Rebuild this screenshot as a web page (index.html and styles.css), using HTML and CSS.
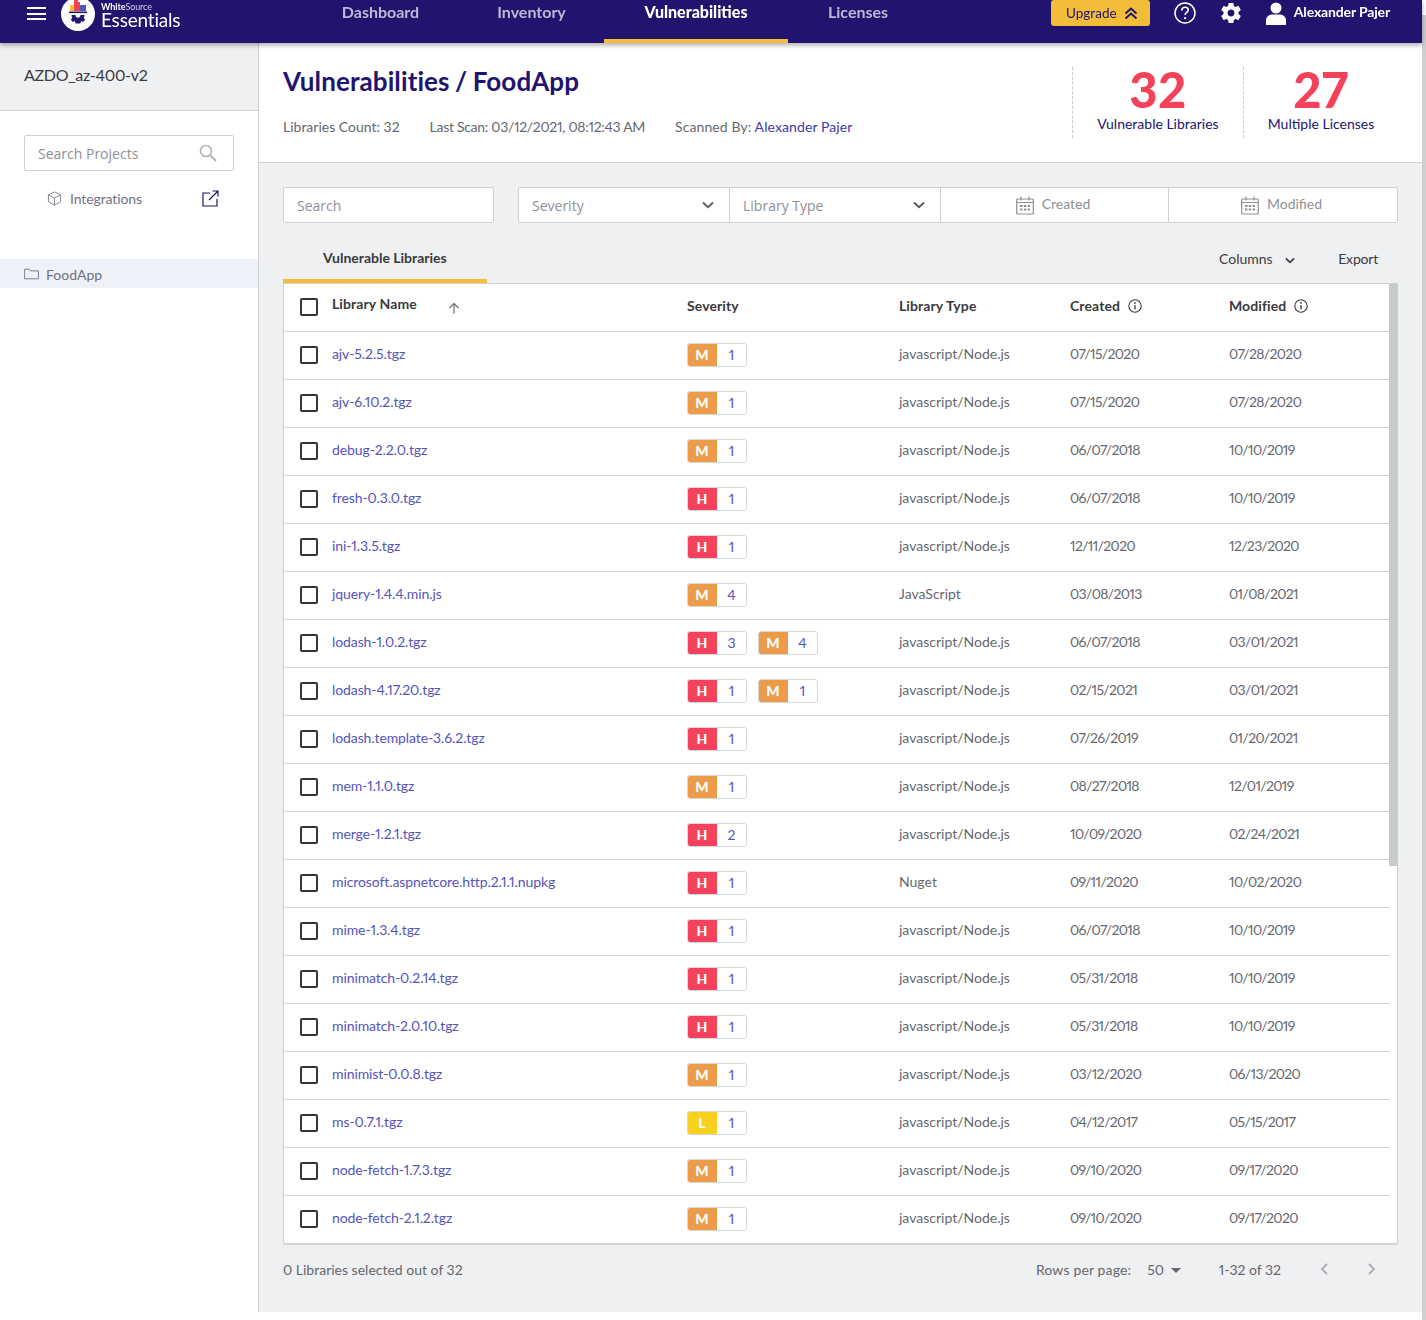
FILE: index.html
```html
<!DOCTYPE html>
<html lang="en">
<head>
    <meta charset="UTF-8">
    <meta name="viewport" content="width=device-width, initial-scale=1.0">
    <title>Vulnerabilities / FoodApp</title>
    <link rel="stylesheet" href="styles.css">
</head>
<body>
    <svg class="sprites" aria-hidden="true">
        <symbol id="calendar" viewBox="0 0 18 20">
            <path d="M1.5 4h15a.8.8 0 0 1 .8.8v13.4a.8.8 0 0 1-.8.8h-15a.8.8 0 0 1-.8-.8V4.800a.8.8 0 0 1 .8-.8zM.8 7.500h16.400M5 1.500v4M13 1.500v4" fill="none" stroke="currentColor" stroke-width="1.200"/>
            <path d="M4 10h2.400v2H4zM7.800 10h2.400v2H7.800zM11.600 10H14v2h-2.400zM4 13.500h2.400v2H4zM7.800 13.500h2.400v2H7.800zM11.600 13.500H14v2h-2.400z" fill="currentColor"/>
        </symbol>
        <symbol id="chevron" viewBox="0 0 12 8">
            <path d="M1 1.500l5 4.700 5-4.700" fill="none" stroke="currentColor" stroke-width="2"/>
        </symbol>
        <symbol id="info" viewBox="0 0 14 14">
            <circle cx="7" cy="7" r="6.200" fill="none" stroke="currentColor" stroke-width="1.100"/>
            <path d="M7 6v4.500" stroke="currentColor" stroke-width="1.300"/>
            <circle cx="7" cy="3.900" r=".9" fill="currentColor"/>
        </symbol>
    </svg>

    <div class="page-scroll"></div>

    <div class="app">
        <header class="topbar">
            <button class="menu-btn" aria-label="Menu"><span></span><span></span><span></span></button>
            <div class="logo">
                <svg class="logo-mark" viewBox="0 0 34 34" width="34" height="34">
                    <circle cx="17" cy="17" r="17" fill="#fff"/>
                    <rect x="9" y="8" width="4" height="6" fill="#f4bd33"/>
                    <rect x="13" y="3" width="4" height="11" fill="#f1404f"/>
                    <rect x="17" y="5" width="2" height="9" fill="#f1404f"/>
                    <rect x="19" y="8" width="6" height="6" fill="#4d58c4"/>
                    <rect x="8" y="14.500" width="18" height="1.600" fill="#21146e"/>
                    <path d="M10.500 18h13c0 1.200-.3 2-.8 3l1.500 1.500-2 2.500-2-1-1 2.500h-4.400l-1-2.500-2 1-2-2.500 1.500-1.500c-.5-1-.8-1.800-.8-3z" fill="#21146e"/>
                    <path d="M14.500 18h5c0 1.600-1.100 2.700-2.500 2.700s-2.500-1.100-2.500-2.700z" fill="#fff"/>
                </svg>
                <div class="logo-text">
                    <div class="logo-small"><b>White</b>Source</div>
                    <div class="logo-big">Essentials</div>
                </div>
            </div>
            <nav class="nav">
                <a class="nav-item">Dashboard</a>
                <a class="nav-item">Inventory</a>
                <a class="nav-item active">Vulnerabilities</a>
                <a class="nav-item">Licenses</a>
            </nav>
            <div class="top-right">
                <button class="upgrade">Upgrade
                    <svg viewBox="0 0 14 14" width="14" height="14"><path d="M1.500 7.500L7 2.500l5.500 5M1.500 12.500L7 7.500l5.500 5" fill="none" stroke="#21146e" stroke-width="2"/></svg>
                </button>
                <svg class="help-icon" viewBox="0 0 22 22" width="22" height="22">
                    <circle cx="11" cy="11" r="10" fill="none" stroke="#fff" stroke-width="1.500"/>
                    <path d="M7.800 8.500c0-2 1.400-3.200 3.300-3.200s3.200 1.100 3.200 2.800c0 2.400-3.200 2.400-3.200 5" fill="none" stroke="#fff" stroke-width="1.600"/>
                    <circle cx="11.100" cy="16.200" r="1.100" fill="#fff"/>
                </svg>
                <svg class="gear-icon" viewBox="0 0 24 24" width="24" height="24">
                    <path fill="#fff" d="M19.430 12.980c.04-.32.070-.64.070-.98s-.03-.66-.07-.98l2.110-1.650c.19-.15.24-.42.120-.64l-2-3.460c-.12-.22-.39-.3-.61-.22l-2.490 1c-.52-.4-1.080-.73-1.690-.98l-.38-2.650C14.460 2.180 14.250 2 14 2h-4c-.25 0-.46.18-.49.42l-.38 2.650c-.61.25-1.170.59-1.690.98l-2.490-1c-.23-.09-.49 0-.61.22l-2 3.460c-.13.22-.07.49.12.64l2.110 1.650c-.04.32-.07.65-.07.98s.03.66.07.98l-2.110 1.650c-.19.15-.24.42-.12.64l2 3.460c.12.22.39.3.61.22l2.490-1c.52.4 1.080.73 1.690.98l.38 2.650c.03.24.24.42.49.42h4c.25 0 .46-.18.49-.42l.38-2.650c.61-.25 1.170-.59 1.690-.98l2.490 1c.23.09.49 0 .61-.22l2-3.460c.12-.22.07-.49-.12-.64l-2.110-1.650zM12 15.500c-1.930 0-3.500-1.570-3.500-3.500s1.570-3.500 3.500-3.500 3.500 1.570 3.500 3.500-1.570 3.500-3.500 3.500z"/>
                </svg>
                <div class="user">
                    <svg viewBox="0 0 20 24" width="20" height="24">
                        <circle cx="10" cy="7" r="5.500" fill="#fff"/>
                        <path d="M0 24v-4.500C0 15.500 3.500 13.500 6 13.500h8c2.500 0 6 2 6 6V24z" fill="#fff"/>
                    </svg>
                    <span>Alexander Pajer</span>
                </div>
            </div>
        </header>

        <div class="body-row">
            <aside class="sidebar">
                <div class="org">AZDO_az-400-v2</div>
                <div class="project-search">
                    <span>Search Projects</span>
                    <svg viewBox="0 0 18 18" width="18" height="18"><circle cx="7" cy="7" r="5.500" fill="none" stroke="#b4b4b8" stroke-width="1.600"/><path d="M11 11l6 6" stroke="#b4b4b8" stroke-width="2"/></svg>
                </div>
                <div class="integrations">
                    <svg viewBox="0 0 16 16" width="15" height="15"><path d="M8 1l6.500 3v7.500L8 15l-6.500-3.500V4zM1.500 4L8 7.500 14.500 4M8 7.500V15" fill="none" stroke="#7d7f8e" stroke-width="1"/></svg>
                    <span>Integrations</span>
                    <svg class="external" viewBox="0 0 17 17" width="17" height="17"><path d="M8 3H1v13h14V9M7 10l9-9M10.500 1H16v5.500" fill="none" stroke="#21146e" stroke-width="1.200"/></svg>
                </div>
                <div class="project-row">
                    <svg viewBox="0 0 15 12" width="15" height="12"><path d="M.6 10.800V1.200h4.600l1.400 1.700h7.800v7.900z" fill="none" stroke="#7d7f8e" stroke-width="1"/></svg>
                    <span>FoodApp</span>
                </div>
            </aside>

            <main class="main">
                <section class="page-head">
                    <div class="page-info">
                        <h1>Vulnerabilities / FoodApp</h1>
                        <div class="meta">
                            <span>Libraries Count: 32</span>
                            <span class="meta-scan">Last Scan: 03/12/2021, 08:12:43 AM</span>
                            <span class="meta-by">Scanned By: <a>Alexander Pajer</a></span>
                        </div>
                    </div>
                    <div class="stat stat-first">
                        <div class="stat-num">32</div>
                        <div class="stat-label">Vulnerable Libraries</div>
                    </div>
                    <div class="stat stat-second">
                        <div class="stat-num">27</div>
                        <div class="stat-label">Multiple Licenses</div>
                    </div>
                </section>

                <section class="content">
                    <div class="filters">
                        <div class="filter-search">Search</div>
                        <div class="filter-group">
                            <div class="filter-select">Severity <svg width="12" height="8"><use href="#chevron"/></svg></div>
                            <div class="filter-select">Library Type <svg width="12" height="8"><use href="#chevron"/></svg></div>
                            <div class="filter-date"><svg width="18" height="20"><use href="#calendar"/></svg><span>Created</span></div>
                            <div class="filter-date"><svg width="18" height="20"><use href="#calendar"/></svg><span>Modified</span></div>
                        </div>
                    </div>

                    <div class="tabs">
                        <div class="tab">Vulnerable Libraries</div>
                        <div class="tab-actions">
                            <span class="columns-btn">Columns <svg width="10" height="7"><use href="#chevron"/></svg></span>
                            <span class="export-btn">Export</span>
                        </div>
                    </div>

                    <div class="table-card">
                        <div class="table-scroll"></div>
                        <div class="row head">
                            <div class="check-cell"><span class="check"></span></div>
                            <div class="name-head">Library Name
                                <svg viewBox="0 0 12 12" width="12" height="12"><path d="M6 11.500V1.500M1.500 6L6 1.500 10.500 6" fill="none" stroke="#77777c" stroke-width="1.300"/></svg>
                            </div>
                            <div>Severity</div>
                            <div>Library Type</div>
                            <div class="info-head">Created <svg width="14" height="14"><use href="#info"/></svg></div>
                            <div class="info-head">Modified <svg width="14" height="14"><use href="#info"/></svg></div>
                        </div>

                        <div class="row"><div class="check-cell"><span class="check"></span></div><a>ajv-5.2.5.tgz</a><div class="sev"><span class="badge"><b class="m">M</b><i>1</i></span></div><div>javascript/Node.js</div><div class="date">07/15/2020</div><div class="date">07/28/2020</div></div>
                        <div class="row"><div class="check-cell"><span class="check"></span></div><a>ajv-6.10.2.tgz</a><div class="sev"><span class="badge"><b class="m">M</b><i>1</i></span></div><div>javascript/Node.js</div><div class="date">07/15/2020</div><div class="date">07/28/2020</div></div>
                        <div class="row"><div class="check-cell"><span class="check"></span></div><a>debug-2.2.0.tgz</a><div class="sev"><span class="badge"><b class="m">M</b><i>1</i></span></div><div>javascript/Node.js</div><div class="date">06/07/2018</div><div class="date">10/10/2019</div></div>
                        <div class="row"><div class="check-cell"><span class="check"></span></div><a>fresh-0.3.0.tgz</a><div class="sev"><span class="badge"><b class="h">H</b><i>1</i></span></div><div>javascript/Node.js</div><div class="date">06/07/2018</div><div class="date">10/10/2019</div></div>
                        <div class="row"><div class="check-cell"><span class="check"></span></div><a>ini-1.3.5.tgz</a><div class="sev"><span class="badge"><b class="h">H</b><i>1</i></span></div><div>javascript/Node.js</div><div class="date">12/11/2020</div><div class="date">12/23/2020</div></div>
                        <div class="row"><div class="check-cell"><span class="check"></span></div><a>jquery-1.4.4.min.js</a><div class="sev"><span class="badge"><b class="m">M</b><i>4</i></span></div><div>JavaScript</div><div class="date">03/08/2013</div><div class="date">01/08/2021</div></div>
                        <div class="row"><div class="check-cell"><span class="check"></span></div><a>lodash-1.0.2.tgz</a><div class="sev"><span class="badge"><b class="h">H</b><i>3</i></span><span class="badge"><b class="m">M</b><i>4</i></span></div><div>javascript/Node.js</div><div class="date">06/07/2018</div><div class="date">03/01/2021</div></div>
                        <div class="row"><div class="check-cell"><span class="check"></span></div><a>lodash-4.17.20.tgz</a><div class="sev"><span class="badge"><b class="h">H</b><i>1</i></span><span class="badge"><b class="m">M</b><i>1</i></span></div><div>javascript/Node.js</div><div class="date">02/15/2021</div><div class="date">03/01/2021</div></div>
                        <div class="row"><div class="check-cell"><span class="check"></span></div><a>lodash.template-3.6.2.tgz</a><div class="sev"><span class="badge"><b class="h">H</b><i>1</i></span></div><div>javascript/Node.js</div><div class="date">07/26/2019</div><div class="date">01/20/2021</div></div>
                        <div class="row"><div class="check-cell"><span class="check"></span></div><a>mem-1.1.0.tgz</a><div class="sev"><span class="badge"><b class="m">M</b><i>1</i></span></div><div>javascript/Node.js</div><div class="date">08/27/2018</div><div class="date">12/01/2019</div></div>
                        <div class="row"><div class="check-cell"><span class="check"></span></div><a>merge-1.2.1.tgz</a><div class="sev"><span class="badge"><b class="h">H</b><i>2</i></span></div><div>javascript/Node.js</div><div class="date">10/09/2020</div><div class="date">02/24/2021</div></div>
                        <div class="row"><div class="check-cell"><span class="check"></span></div><a>microsoft.aspnetcore.http.2.1.1.nupkg</a><div class="sev"><span class="badge"><b class="h">H</b><i>1</i></span></div><div>Nuget</div><div class="date">09/11/2020</div><div class="date">10/02/2020</div></div>
                        <div class="row"><div class="check-cell"><span class="check"></span></div><a>mime-1.3.4.tgz</a><div class="sev"><span class="badge"><b class="h">H</b><i>1</i></span></div><div>javascript/Node.js</div><div class="date">06/07/2018</div><div class="date">10/10/2019</div></div>
                        <div class="row"><div class="check-cell"><span class="check"></span></div><a>minimatch-0.2.14.tgz</a><div class="sev"><span class="badge"><b class="h">H</b><i>1</i></span></div><div>javascript/Node.js</div><div class="date">05/31/2018</div><div class="date">10/10/2019</div></div>
                        <div class="row"><div class="check-cell"><span class="check"></span></div><a>minimatch-2.0.10.tgz</a><div class="sev"><span class="badge"><b class="h">H</b><i>1</i></span></div><div>javascript/Node.js</div><div class="date">05/31/2018</div><div class="date">10/10/2019</div></div>
                        <div class="row"><div class="check-cell"><span class="check"></span></div><a>minimist-0.0.8.tgz</a><div class="sev"><span class="badge"><b class="m">M</b><i>1</i></span></div><div>javascript/Node.js</div><div class="date">03/12/2020</div><div class="date">06/13/2020</div></div>
                        <div class="row"><div class="check-cell"><span class="check"></span></div><a>ms-0.7.1.tgz</a><div class="sev"><span class="badge"><b class="l">L</b><i>1</i></span></div><div>javascript/Node.js</div><div class="date">04/12/2017</div><div class="date">05/15/2017</div></div>
                        <div class="row"><div class="check-cell"><span class="check"></span></div><a>node-fetch-1.7.3.tgz</a><div class="sev"><span class="badge"><b class="m">M</b><i>1</i></span></div><div>javascript/Node.js</div><div class="date">09/10/2020</div><div class="date">09/17/2020</div></div>
                        <div class="row last"><div class="check-cell"><span class="check"></span></div><a>node-fetch-2.1.2.tgz</a><div class="sev"><span class="badge"><b class="m">M</b><i>1</i></span></div><div>javascript/Node.js</div><div class="date">09/10/2020</div><div class="date">09/17/2020</div></div>
                    </div>

                    <div class="table-foot">
                        <span>0 Libraries selected out of 32</span>
                        <div class="pager">
                            <span class="rows-label">Rows per page:</span>
                            <span class="rows-select">50 <i class="caret"></i></span>
                            <span class="range">1-32 of 32</span>
                            <svg viewBox="0 0 8 12" width="8" height="12"><path d="M7 1L2 6l5 5" fill="none" stroke="#a9abaf" stroke-width="1.800"/></svg>
                            <svg viewBox="0 0 8 12" width="8" height="12"><path d="M1 1l5 5-5 5" fill="none" stroke="#a9abaf" stroke-width="1.800"/></svg>
                        </div>
                    </div>
                </section>
            </main>
        </div>
    </div>
</body>
</html>
```

FILE: styles.css
```css
* {
    margin: 0;
    padding: 0;
    box-sizing: border-box;
}

body {
    font-family: "Lato", "Open Sans", sans-serif;
    font-size: 14px;
    font-variant-numeric: proportional-nums;
    color: #66676d;
    background-color: #fff;
    height: 1320px;
    overflow: hidden;
}

.sprites {
    display: none;
}

.page-scroll {
    position: fixed;
    top: 15px;
    right: 0;
    bottom: 0;
    width: 4px;
    background-color: #cfcfcf;
}

.app {
    width: 1422px;
    height: 1312px;
    display: flex;
    flex-direction: column;
}

button {
    border: none;
    background: none;
    font-family: inherit;
}

/* top bar */
.topbar {
    height: 43px;
    flex: none;
    background-color: #21146e;
    box-shadow: 0 2px 5px rgba(0, 0, 0, 0.35);
    display: flex;
    position: relative;
    z-index: 2;
}

.menu-btn {
    width: 19px;
    margin: 7px 0 0 27px;
    height: 13px;
    display: flex;
    flex-direction: column;
    justify-content: space-between;
}

.menu-btn span {
    display: block;
    height: 2px;
    background-color: #fff;
}

.logo {
    display: flex;
    align-items: flex-start;
    margin-left: 15px;
    margin-top: -3px;
    color: #fff;
    width: 118px;
    flex: none;
}

.logo-mark {
    flex: none;
}

.logo-text {
    margin-left: 6px;
    padding-top: 5px;
}

.logo-small {
    font-size: 9px;
    line-height: 9px;
    color: #cfcde2;
    letter-spacing: -0.1px;
}

.logo-small b {
    color: #fff;
}

.logo-big {
    font-size: 19px;
    line-height: 17px;
    letter-spacing: -0.2px;
}

.nav {
    display: grid;
    grid-template-columns: 157px 145px 184px 140px;
    margin-left: 123px;
}

.nav-item {
    padding-top: 2px;
    text-align: center;
    font-size: 16px;
    font-weight: 700;
    color: #bdb9d4;
    border-bottom: 4px solid transparent;
}

.nav-item.active {
    color: #fff;
    font-weight: 900;
    border-bottom-color: #f3bd3a;
}

.top-right {
    margin-left: auto;
    display: flex;
    align-items: flex-start;
    padding-right: 32px;
}

.upgrade {
    width: 99px;
    height: 26px;
    padding-left: 3px;
    background-color: #f3bd3a;
    color: #21146e;
    border-radius: 3px;
    font-size: 13.500px;
    display: flex;
    align-items: center;
    justify-content: center;
    gap: 7px;
}

.help-icon {
    margin: 2px 0 0 24px;
}

.gear-icon {
    margin: 1px 0 0 23px;
}

.user {
    display: flex;
    align-items: flex-start;
    gap: 8px;
    margin-left: 23px;
    margin-top: 1px;
    color: #fff;
    font-size: 14px;
    font-weight: 700;
    line-height: 22px;
    letter-spacing: -0.15px;
}

/* sidebar */
.body-row {
    flex: 1;
    display: flex;
    min-height: 0;
}

.sidebar {
    width: 259px;
    flex: none;
    border-right: 1px solid #cfd0d3;
    background-color: #fff;
}

.org {
    height: 68px;
    background-color: #eff0f2;
    border-bottom: 1px solid #cfd0d3;
    padding: 22px 24px 0;
    font-size: 16px;
    letter-spacing: -0.3px;
    color: #3a3a40;
}

.project-search {
    margin: 24px 24px 0;
    width: 210px;
    height: 36px;
    border: 1px solid #cfd0d3;
    border-radius: 2px;
    padding: 0 16px 0 13px;
    display: flex;
    align-items: center;
    justify-content: space-between;
    font-family: "Open Sans", sans-serif;
    color: #8e8f95;
}

.integrations {
    display: flex;
    align-items: center;
    margin: 17px 0 0 47px;
    width: 172px;
    height: 20px;
    color: #6f7180;
    letter-spacing: -0.1px;
}

.integrations span {
    margin-left: 8px;
}

.integrations .external {
    margin-left: auto;
}

.project-row {
    margin-top: 51px;
    height: 29px;
    padding-top: 1px;
    background-color: #eef1f8;
    display: flex;
    align-items: center;
    gap: 7px;
    padding-left: 24px;
    color: #6f7180;
}

/* page head */
.main {
    flex: 1;
    display: flex;
    flex-direction: column;
    min-width: 0;
}

.page-head {
    height: 120px;
    flex: none;
    border-bottom: 1px solid #cfd0d3;
    padding: 24px 0 0 24px;
    display: flex;
    align-items: flex-start;
}

.page-info {
    flex: 1;
}

h1 {
    margin-top: -1px;
    font-size: 26px;
    line-height: 30px;
    font-weight: 700;
    color: #21146e;
    letter-spacing: 0.1px;
    word-spacing: -1px;
}

.meta {
    margin-top: 22px;
    display: flex;
    gap: 30px;
    color: #66676d;
}

.meta-scan {
    letter-spacing: -0.3px;
}

.meta-by {
    letter-spacing: 0.1px;
}

.meta a {
    color: #3d3aa8;
}

.stat {
    height: 71px;
    border-left: 1px dashed #c8c9cc;
    text-align: center;
}

.stat-first {
    width: 171px;
}

.stat-second {
    width: 155px;
    margin-right: 24px;
}

.stat-num {
    font-size: 49px;
    line-height: 44px;
    font-weight: 900;
    letter-spacing: 0.5px;
    color: #f3425a;
}

.stat-label {
    margin-top: 4px;
    color: #21146e;
    font-size: 14px;
}

/* content */
.content {
    flex: 1;
    background-color: #eff0f2;
    padding: 24px 24px 0;
    min-height: 0;
}

.filters {
    display: flex;
    gap: 24px;
    font-family: "Open Sans", sans-serif;
    color: #8e8f95;
}

.filter-search {
    width: 211px;
    height: 36px;
    background-color: #fff;
    border: 1px solid #cfd0d3;
    border-radius: 2px;
    padding: 8px 13px;
}

.filter-group {
    flex: 1;
    display: flex;
    height: 36px;
    background-color: #fff;
    border: 1px solid #cfd0d3;
    border-radius: 2px;
}

.filter-select {
    width: 211px;
    border-right: 1px solid #cfd0d3;
    padding: 0 15px 0 13px;
    display: flex;
    align-items: center;
    justify-content: space-between;
}

.filter-select svg {
    color: #5e5e62;
}

.filter-date {
    width: 227px;
    padding-right: 3px;
    display: flex;
    align-items: center;
    justify-content: center;
    gap: 8px;
    color: #8e8f95;
    font-family: "Lato", sans-serif;
}

.filter-date:last-child {
    flex: 1;
    border-left: 1px solid #cfd0d3;
}

.filter-date span {
    margin-bottom: 3px;
}

.tabs {
    height: 60px;
    display: flex;
    align-items: stretch;
    justify-content: space-between;
}

.tab {
    width: 204px;
    padding: 26px 0 0 40px;
    border-bottom: 4px solid #f3bd3a;
    font-weight: 700;
    color: #3a3a40;
}

.tab-actions {
    display: flex;
    gap: 43px;
    padding: 27px 20px 0 0;
    color: #3a3a40;
}

.export-btn {
    letter-spacing: -0.2px;
}

.columns-btn svg {
    margin-left: 9px;
}

.table-card {
    position: relative;
    background-color: #fff;
    border: 1px solid #cfd0d3;
    border-radius: 0 0 2px 2px;
    box-shadow: 0 1px 1px rgba(0, 0, 0, 0.12);
    height: 961px;
    overflow: hidden;
}

.table-scroll {
    position: absolute;
    right: 0;
    top: 0;
    width: 8px;
    height: 582px;
    background-color: #c6cac9;
}

.row {
    height: 48px;
    width: 1105px;
    padding-bottom: 1px;
    display: grid;
    grid-template-columns: 48px 355px 212px 171px 159px 1fr;
    align-items: center;
    border-bottom: 1px solid #cfd0d3;
    color: #66676d;
}

.row.last {
    border-bottom-color: transparent;
}

.row > a,
.row > div {
    margin-bottom: 4px;
}

.row > .sev,
.row > .check-cell {
    margin-bottom: 0;
}

.row > a {
    color: #5553bd;
    letter-spacing: -0.1px;
}

.date {
    letter-spacing: -0.65px;
}

.row.head {
    font-weight: 700;
    color: #3a3a40;
    letter-spacing: 0.1px;
}

.check {
    display: block;
    width: 18px;
    height: 18px;
    margin-left: 16px;
    border: 2px solid #36363a;
    border-radius: 2px;
}

.row.head .name-head {
    margin-bottom: 6px;
}

.name-head svg {
    margin-left: 28px;
    vertical-align: -5px;
}

.info-head svg {
    margin-left: 4px;
    vertical-align: -2px;
}

.sev {
    display: flex;
    gap: 11px;
}

.badge {
    width: 60px;
    height: 24px;
    display: flex;
    border: 1px solid #d5d6d9;
    border-radius: 3px;
    overflow: hidden;
}

.badge b {
    width: 30px;
    margin: -1px 0 -1px -1px;
    color: #fff;
    text-align: center;
    line-height: 24px;
    font-weight: 900;
}

.badge b.m {
    background-color: #ec9b4b;
}

.badge b.h {
    background-color: #f3425a;
}

.badge b.l {
    background-color: #f8d11f;
}

.badge i {
    flex: 1;
    text-align: center;
    font-style: normal;
    color: #5553bd;
    line-height: 22px;
}

.table-foot {
    display: flex;
    justify-content: space-between;
    align-items: center;
    height: 50px;
}

.pager {
    display: flex;
    align-items: center;
    padding-right: 22px;
}

.rows-label {
    letter-spacing: 0.15px;
}

.rows-select {
    margin-left: 16px;
}

.caret {
    display: inline-block;
    margin-left: 3px;
    vertical-align: 2px;
    border: 5px solid transparent;
    border-bottom: none;
    border-top-color: #66676d;
}

.range {
    margin-left: 38px;
    margin-right: 39px;
}

.pager svg + svg {
    margin-left: 40px;
}
```
